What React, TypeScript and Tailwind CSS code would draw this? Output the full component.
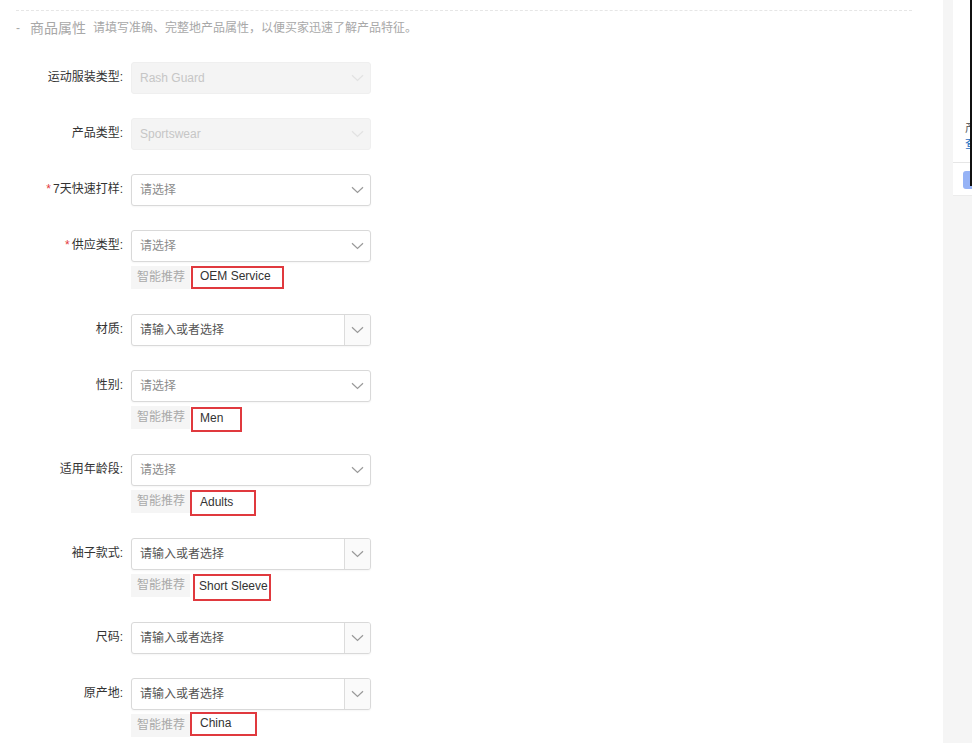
import React from 'react';

type Hint = { text: string; box: string };

type Field = {
  label: string;
  required?: boolean;
  kind: 'disabled' | 'select' | 'combo';
  value?: string;
  hint?: Hint;
};

const fields: Field[] = [
  { label: '运动服装类型:', kind: 'disabled', value: 'Rash Guard' },
  { label: '产品类型:', kind: 'disabled', value: 'Sportswear' },
  { label: '7天快速打样:', kind: 'select', required: true },
  {
    label: '供应类型:',
    kind: 'select',
    required: true,
    hint: { text: 'OEM Service', box: 'mt-[4px] ml-[1px] w-[93px] h-[23px] pl-[7px]' },
  },
  { label: '材质:', kind: 'combo' },
  {
    label: '性别:',
    kind: 'select',
    hint: { text: 'Men', box: 'mt-[5px] ml-[1px] w-[51px] h-[25px] pl-[7px]' },
  },
  {
    label: '适用年龄段:',
    kind: 'select',
    hint: { text: 'Adults', box: 'mt-[4px] ml-[0px] w-[66px] h-[26px] pl-[8px]' },
  },
  {
    label: '袖子款式:',
    kind: 'combo',
    hint: { text: 'Short Sleeve', box: 'mt-[4px] ml-[3px] w-[78px] h-[27px] pl-[4px]' },
  },
  { label: '尺码:', kind: 'combo' },
  {
    label: '原产地:',
    kind: 'combo',
    hint: { text: 'China', box: 'mt-[2px] ml-[0px] w-[67px] h-[24px] pl-[8px]' },
  },
];

function Chevron({ faint }: { faint?: boolean }) {
  return (
    <svg width="13" height="8" viewBox="0 0 13 8" fill="none">
      <path
        d="M1 1.2 L6.5 6.5 L12 1.2"
        stroke={faint ? '#e2e2e2' : '#9a9a9a'}
        strokeWidth="1.2"
      />
    </svg>
  );
}

function FieldBox({ field }: { field: Field }) {
  if (field.kind === 'disabled') {
    return (
      <div className="flex h-[32px] w-[240px] items-center rounded-[3px] border border-[#efefef] bg-[#f4f4f4]">
        <span className="flex-1 pl-[8px] text-[12px] text-[#c6c6c6]">{field.value}</span>
        <span className="flex w-[26px] justify-center">
          <Chevron faint />
        </span>
      </div>
    );
  }

  if (field.kind === 'combo') {
    return (
      <div className="flex h-[32px] w-[240px] items-stretch overflow-hidden rounded-[3px] border border-[#d9d9d9] bg-white shadow-[0_1px_2px_rgba(0,0,0,0.04)]">
        <span className="flex flex-1 items-center pl-[8px] text-[12px] text-[#555]">请输入或者选择</span>
        <span className="flex w-[26px] items-center justify-center border-l border-[#dcdcdc] bg-[#fafafa]">
          <Chevron />
        </span>
      </div>
    );
  }

  return (
    <div className="flex h-[32px] w-[240px] items-center rounded-[3px] border border-[#d9d9d9] bg-white shadow-[0_1px_2px_rgba(0,0,0,0.04)]">
      <span className="flex-1 pl-[8px] text-[12px] text-[#8c8c8c]">请选择</span>
      <span className="flex w-[26px] justify-center">
        <Chevron />
      </span>
    </div>
  );
}

function FieldRow({ field }: { field: Field }) {
  return (
    <div className="flex pb-[24px]">
      <label className="h-[32px] w-[123px] shrink-0 text-right text-[12px] leading-[30px] text-[#333]">
        {field.required && <span className="mr-[2px] text-[#e4393c]">*</span>}
        {field.label}
      </label>
      <div className="ml-[8px] flex flex-col">
        <FieldBox field={field} />
        {field.hint && (
          <div className="flex h-[28px] items-start">
            <span className="mt-[4px] h-[23px] w-[59px] shrink-0 whitespace-nowrap bg-[#f5f5f5] pl-[6px] text-[12px] leading-[23px] text-[#aaa]">
              智能推荐
            </span>
            <span
              className={`${field.hint.box} flex shrink-0 items-center whitespace-nowrap border-2 border-[#e0393e] bg-white pb-[3px] text-[12px] text-[#333]`}
            >
              {field.hint.text}
            </span>
          </div>
        )}
      </div>
    </div>
  );
}

export default function App() {
  return (
    <div className="relative flex h-[743px] w-[972px] overflow-hidden bg-white font-['Liberation_Sans','Noto_Sans_CJK_SC',sans-serif]">
      <div className="w-[943px] shrink-0">
        <div className="ml-[16px] mt-[10px] w-[896px] border-t border-dashed border-[#e6e6e6]" />
        <div className="ml-[16px] mt-[9px] flex h-[16px] items-center text-[#a8a8a8]">
          <span className="w-[14px] text-[12px]">-</span>
          <span className="text-[14px]">商品属性</span>
          <span className="ml-[7px] text-[12px]">请填写准确、完整地产品属性，以便买家迅速了解产品特征。</span>
        </div>
        <div className="mt-[26px] flex flex-col">
          {fields.map((f) => (
            <FieldRow key={f.label} field={f} />
          ))}
        </div>
      </div>

      <div className="flex-1 bg-[#f5f5f5]">
        <div className="ml-[10px] h-[196px] border-b border-[#ececec] bg-white">
          <div className="whitespace-nowrap pl-[12px] pt-[120px] text-[12px] leading-[16px]">
            <div className="text-[#666]">产品信息</div>
            <div className="text-[#1f6fbf]">查看详情</div>
          </div>
          <div className="mt-[10px] border-t border-[#e6e6e6] pl-[10px] pt-[8px]">
            <div className="h-[18px] w-[30px] rounded-l-[3px] bg-[#96b3f6]" />
          </div>
        </div>
      </div>

      <div className="absolute right-0 top-0 h-[186px] w-[2px] bg-[#111]" />
    </div>
  );
}
